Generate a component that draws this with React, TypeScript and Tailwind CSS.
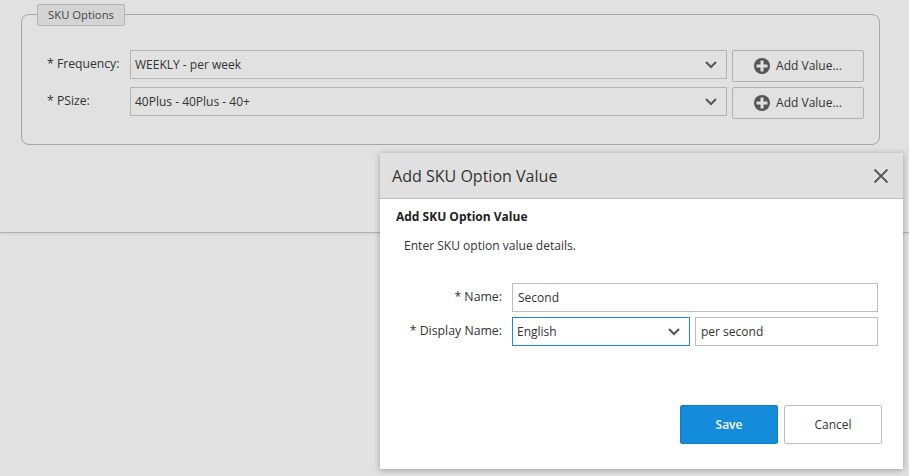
import React from "react";

const Chevron = ({ color = "#555" }: { color?: string }) => (
  <svg width="12" height="8" viewBox="0 0 12 8" fill="none" stroke={color} strokeWidth="2">
    <path d="M1 1 L6 6 L11 1" />
  </svg>
);

const Plus = () => (
  <svg width="16" height="16" viewBox="0 0 16 16">
    <circle cx="8" cy="8" r="8" fill="#555" />
    <path d="M8 2.5v11M2.5 8h11" stroke="#e0e0e0" strokeWidth="3" />
  </svg>
);

const Row = ({ label, value }: { label: string; value: string }) => (
  <div className="flex h-[30px] items-start">
    <div className="w-[87px] pl-[4px] pt-[6px] text-[12.2px] leading-[16px] text-[#333]">{label}</div>
    <div className="flex h-[29px] w-[597px] items-center justify-between border border-[#b5b5b5] pl-[4px] pr-[9px]">
      <span className="text-[12px] text-[#333]">{value}</span>
      <Chevron />
    </div>
    <div className="ml-[5px] flex h-[32px] w-[132px] items-center justify-center gap-[6px] rounded-[2px] border border-[#b0b0b0] text-[12px] text-[#333]">
      <Plus />
      <span>Add Value...</span>
    </div>
  </div>
);

export default function App() {
  return (
    <div className="relative h-[476px] w-[909px] overflow-hidden bg-[#e1e1e1] font-['Open_Sans',sans-serif] text-[#333]">
      <div className="h-[233px] border-b border-[#b2b2b2] pl-[21px] pt-[14px] shadow-[0_1px_2px_rgba(0,0,0,0.08)]">
        <div className="relative h-[131px] w-[859px] rounded-[8px] border border-[#a6a6a6] pl-[21px] pt-[35px]">
          <div className="absolute left-[15px] top-[-11px] flex h-[22px] w-[88px] items-center justify-center rounded-[2px] border border-[#b5b5b5] bg-[#d4d4d4] text-[11.3px] text-[#444]">
            SKU Options
          </div>
          <div className="flex flex-col gap-[7px]">
            <Row label="* Frequency:" value="WEEKLY - per week" />
            <Row label="* PSize:" value="40Plus - 40Plus - 40+" />
          </div>
        </div>
      </div>

      <div className="absolute left-[380px] top-[153px] flex h-[316px] w-[523px] flex-col bg-white shadow-[0_1px_6px_rgba(0,0,0,0.3)]">
        <div className="flex h-[46px] items-center justify-between border-b border-[#bdbdbd] bg-[#e0e0e0] pl-[12px] pr-[14px]">
          <span className="pt-[1px] text-[16.05px] text-[#333]">Add SKU Option Value</span>
          <svg width="16" height="16" viewBox="0 0 16 16" stroke="#555" strokeWidth="1.8" fill="none">
            <path d="M1.5 1.5 L14.5 14.5 M14.5 1.5 L1.5 14.5" />
          </svg>
        </div>
        <div className="pl-[16px] pt-[9px] text-[12px] font-bold leading-[17px] text-[#222]">Add SKU Option Value</div>
        <div className="pl-[24px] pt-[12px] text-[12.05px] leading-[17px] text-[#333]">Enter SKU option value details.</div>
        <div className="mt-[29px] flex items-center">
          <div className="w-[122px] pb-[1px] text-right text-[12.3px] text-[#333]">* Name:</div>
          <div className="ml-[10px] flex h-[29px] w-[366px] items-center border border-[#bdbdbd] pl-[5px] text-[12px] text-[#333]">Second</div>
        </div>
        <div className="mt-[5px] flex items-center">
          <div className="w-[122px] pb-[1px] text-right text-[12.3px] text-[#333]">* Display Name:</div>
          <div className="ml-[10px] flex h-[29px] w-[178px] items-center justify-between border border-[#1a8cd8] pl-[4px] pr-[9px] text-[12px] text-[#333]">
            <span>English</span>
            <Chevron />
          </div>
          <div className="ml-[5px] flex h-[29px] w-[183px] items-center border border-[#bdbdbd] pl-[5px] text-[12px] text-[#333]">per second</div>
        </div>
        <div className="mt-[59px] flex pl-[300px]">
          <div className="flex h-[39px] w-[98px] items-center justify-center rounded-[2px] border border-[#127fc4] bg-[#148cdb] text-[12px] font-semibold text-white">Save</div>
          <div className="ml-[6px] flex h-[39px] w-[98px] items-center justify-center rounded-[2px] border border-[#bdbdbd] bg-white text-[12px] text-[#333]">Cancel</div>
        </div>
      </div>
    </div>
  );
}
